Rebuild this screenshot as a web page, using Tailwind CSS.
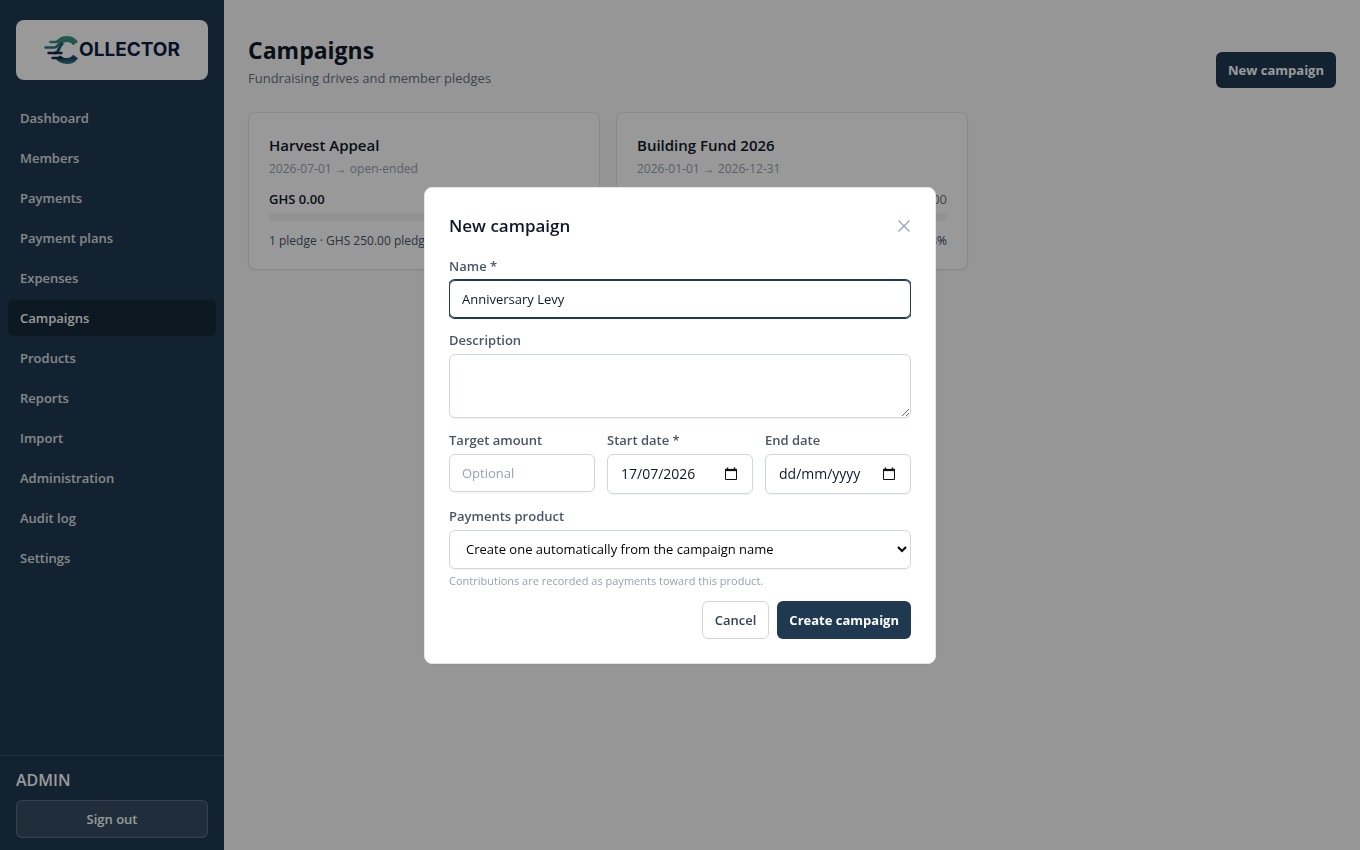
<!DOCTYPE html>
<html lang="en">
<head>
    <meta charset="UTF-8">
    <meta name="viewport" content="width=device-width, initial-scale=1.0">
    <title>Campaigns - Collector</title>
    <script src="https://cdn.jsdelivr.net/npm/@tailwindcss/browser@4"></script>
</head>
<body class="bg-[#f8faf9] font-['Segoe_UI','Open_Sans',sans-serif] text-[13px] leading-5 text-gray-900">
    <div class="flex min-h-screen">
        <!-- Sidebar -->
        <aside class="sticky top-0 flex h-screen w-56 shrink-0 flex-col bg-[#1f3950] text-white">
            <div class="px-4 pt-5">
                <a href="#" class="flex h-[60px] items-center justify-center rounded-lg bg-white" aria-label="Collector">
                    <svg class="h-[30px] w-[35px]" viewBox="0 0 35 30" fill="none" aria-hidden="true">
                        <defs>
                            <linearGradient id="mark" gradientUnits="userSpaceOnUse" x1="0" y1="0" x2="0" y2="30">
                                <stop offset="0" stop-color="#3f9a83"/>
                                <stop offset="0.5" stop-color="#2f7d80"/>
                                <stop offset="0.75" stop-color="#1d4565"/>
                                <stop offset="1" stop-color="#2f8583"/>
                            </linearGradient>
                        </defs>
                        <path d="M31.500 8.500C29.500 5.500 27 4 23 4c-4.500 0-7 1.800-9 4.500" stroke="url(#mark)" stroke-width="6"/>
                        <path d="M31.500 21.500C29.500 24.500 27 26 23 26c-4.500 0-7-1.500-9-4" stroke="url(#mark)" stroke-width="6"/>
                        <path d="M19 8c-3 2-3.500 4.500-4.500 7-.8 2-2 3-4 3" stroke="#1f5a68" stroke-width="3"/>
                        <path d="M6.500 7h5c2.500 0 4-1.500 6-3.500" stroke="#3a917f" stroke-width="2.600" stroke-linecap="round"/>
                        <path d="M1.500 12.500h9c2 0 3-1.500 4-3" stroke="#2d7b7d" stroke-width="2.400" stroke-linecap="round"/>
                        <path d="M4.500 18h13M8.500 23h9" stroke="#14294a" stroke-width="2.400" stroke-linecap="round"/>
                    </svg>
                    <span class="font-['Inter'] text-[19px] font-bold text-[#0b1f42]">OLLECTOR</span>
                </a>
            </div>
            <nav class="mt-5 flex flex-1 flex-col gap-1 px-2 font-semibold text-white/85">
                <a href="#" class="rounded-md px-3 py-2">Dashboard</a>
                <a href="#" class="rounded-md px-3 py-2">Members</a>
                <a href="#" class="rounded-md px-3 py-2">Payments</a>
                <a href="#" class="rounded-md px-3 py-2">Payment plans</a>
                <a href="#" class="rounded-md px-3 py-2">Expenses</a>
                <a href="#" class="rounded-md bg-[#14283a] px-3 py-2 text-white">Campaigns</a>
                <a href="#" class="rounded-md px-3 py-2">Products</a>
                <a href="#" class="rounded-md px-3 py-2">Reports</a>
                <a href="#" class="rounded-md px-3 py-2">Import</a>
                <a href="#" class="rounded-md px-3 py-2">Administration</a>
                <a href="#" class="rounded-md px-3 py-2">Audit log</a>
                <a href="#" class="rounded-md px-3 py-2">Settings</a>
            </nav>
            <div class="border-t border-white/10 px-4 py-3">
                <p class="text-base leading-6 font-semibold">ADMIN</p>
                <button type="button" class="mt-2 w-full rounded-md border border-white/20 bg-white/10 py-2 font-semibold">Sign out</button>
            </div>
        </aside>

        <!-- Page -->
        <main class="min-w-0 flex-1 px-6 pt-8 pb-6">
            <header class="mb-6 flex items-end justify-between">
                <div>
                    <h1 class="text-[23px] leading-9 font-bold">Campaigns</h1>
                    <p class="text-gray-500">Fundraising drives and member pledges</p>
                </div>
                <button type="button" class="rounded-md bg-[#1f3950] px-3 py-2 font-bold text-white">New campaign</button>
            </header>

            <div class="grid grid-cols-3 gap-4">
                <article class="rounded-lg border border-gray-200 bg-white p-5 shadow-xs">
                    <h2 class="text-[15px] leading-6 font-semibold">Harvest Appeal</h2>
                    <p class="mt-1 text-[12px] leading-4 text-gray-400">2026-07-01 → open-ended</p>
                    <p class="mt-3 font-semibold">GHS 0.00</p>
                    <div class="mt-1 h-2 rounded-full bg-gray-100"></div>
                    <p class="mt-3 text-[12px] leading-4 text-gray-600">1 pledge · GHS 250.00 pledged</p>
                </article>
                <article class="rounded-lg border border-gray-200 bg-white p-5 shadow-xs">
                    <h2 class="text-[15px] leading-6 font-semibold">Building Fund 2026</h2>
                    <p class="mt-1 text-[12px] leading-4 text-gray-400">2026-01-01 → 2026-12-31</p>
                    <p class="mt-3 text-right text-gray-500">.00</p>
                    <div class="mt-1 h-2 rounded-full bg-gray-100"></div>
                    <p class="mt-3 text-right text-[12px] leading-4 font-medium text-gray-700">3%</p>
                </article>
            </div>
        </main>
    </div>

    <!-- New campaign dialog -->
    <div class="fixed inset-0 z-10 flex items-center justify-center bg-black/40 p-4">
        <div role="dialog" aria-modal="true" aria-labelledby="dialog-title" class="w-full max-w-lg rounded-lg border border-gray-200 bg-white p-6 shadow-xs">
            <div class="mb-4 flex items-center justify-between">
                <h2 id="dialog-title" class="text-[17px] leading-7 font-semibold">New campaign</h2>
                <button type="button" aria-label="Close" class="text-gray-400">
                    <svg class="size-[14px]" viewBox="0 0 14 14" fill="none" stroke="currentColor" stroke-width="1.300"><path d="M1.500 1.500l11 11M12.500 1.500l-11 11"/></svg>
                </button>
            </div>

            <form class="flex flex-col gap-3 overflow-x-hidden">
                <div>
                    <label for="name" class="block font-semibold text-gray-600">Name *</label>
                    <input id="name" type="text" value="Anniversary Levy" required class="mt-1 block h-[38px] w-full rounded-md border border-[#1f3950] px-3 ring-1 ring-[#1f3950] outline-none">
                </div>
                <div>
                    <label for="description" class="block font-semibold text-gray-600">Description</label>
                    <textarea id="description" class="mt-1 block h-16 w-full resize-y rounded-md border border-gray-300 px-3 py-2 shadow-xs"></textarea>
                </div>
                <div class="grid grid-cols-3 items-start gap-3">
                    <div>
                        <label for="target" class="block font-semibold text-gray-600">Target amount</label>
                        <input id="target" type="text" placeholder="Optional" class="mt-1 block h-[38px] w-full rounded-md border border-gray-300 px-3 shadow-xs placeholder:text-gray-400">
                    </div>
                    <div>
                        <label for="start" class="block font-semibold text-gray-600">Start date *</label>
                        <div class="mt-1 flex h-10 items-center rounded-md border border-gray-300 px-3 shadow-xs">
                            <input id="start" type="text" value="17/07/2026" class="min-w-0 flex-1 px-px text-sm outline-none">
                            <button type="button" aria-label="Pick start date" class="mr-0.5">
                                <svg class="size-[14px]" viewBox="0 0 14 14" fill="none" stroke="#111"><path d="M1.500 3.500h11v9h-11z"/><path d="M1 3h12" stroke-width="2.200"/><path d="M3.500 .5v2M10.500 .5v2" stroke-width="1.500"/></svg>
                            </button>
                        </div>
                    </div>
                    <div>
                        <label for="end" class="block font-semibold text-gray-600">End date</label>
                        <div class="mt-1 flex h-10 items-center rounded-md border border-gray-300 px-3 shadow-xs">
                            <input id="end" type="text" placeholder="dd/mm/yyyy" class="min-w-0 flex-1 px-px text-sm outline-none placeholder:text-gray-900">
                            <button type="button" aria-label="Pick end date" class="mr-0.5">
                                <svg class="size-[14px]" viewBox="0 0 14 14" fill="none" stroke="#111"><path d="M1.500 3.500h11v9h-11z"/><path d="M1 3h12" stroke-width="2.200"/><path d="M3.500 .5v2M10.500 .5v2" stroke-width="1.500"/></svg>
                            </button>
                        </div>
                    </div>
                </div>
                <div>
                    <label for="product" class="block font-semibold text-gray-600">Payments product</label>
                    <select id="product" class="mt-1 block h-[39px] w-full rounded-md border border-gray-300 bg-white px-3 text-black shadow-xs">
                        <option>Create one automatically from the campaign name</option>
                    </select>
                    <p class="mt-1 text-[11px] leading-4 text-gray-400">Contributions are recorded as payments toward this product.</p>
                </div>
                <div class="flex justify-end gap-2">
                    <button type="button" class="rounded-md border border-gray-300 bg-white px-3 py-2 font-semibold text-gray-700">Cancel</button>
                    <button type="submit" class="rounded-md bg-[#1f3950] px-3 py-2 font-bold text-white">Create campaign</button>
                </div>
            </form>
        </div>
    </div>
</body>
</html>
